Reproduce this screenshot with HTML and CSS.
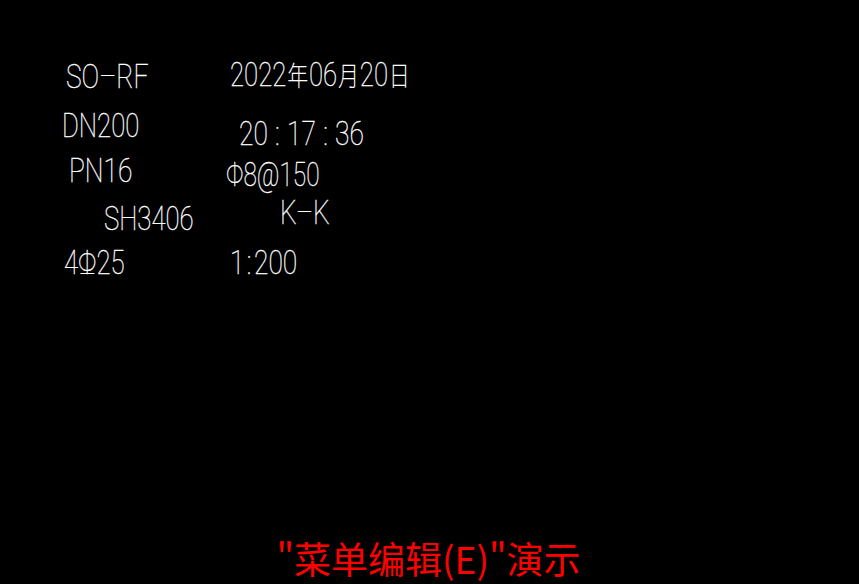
FILE: index.html
```html
<!DOCTYPE html>
<html lang="zh">
<head>
<meta charset="utf-8">
<title>CAD</title>
<link rel="stylesheet" href="styles.css">
</head>
<body>
<div class="screen">
  <div class="canvas">
    <div class="txt t-sorf">SO–RF</div>
    <div class="txt t-date">2022<span class="cjk">年</span>06<span class="cjk">月</span>20<span class="cjk">日</span></div>
    <div class="txt t-dn">DN200</div>
    <div class="txt t-time">20<span class="colon">:</span>17<span class="colon">:</span>36</div>
    <div class="txt t-pn">PN16</div>
    <div class="txt t-phi">Φ8@150</div>
    <div class="txt t-sh">SH3406</div>
    <div class="txt t-kk">K–K</div>
    <div class="txt t-rebar">4<span class="rebar">Φ</span>25</div>
    <div class="txt t-scale">1<span class="colon-s">:</span>200</div>
  </div>
  <div class="caption">"菜单编辑(E)"演示</div>
</div>
</body>
</html>
```
FILE: styles.css
```css
html, body {
  margin: 0;
  padding: 0;
  background: #000;
}
.screen {
  width: 859px;
  height: 584px;
  display: flex;
  flex-direction: column;
  background: #000;
  overflow: hidden;
}
.canvas {
  position: relative;
  flex: 1;
}
.txt {
  position: absolute;
  color: #fff;
  font-family: Roboto, "DejaVu Sans", sans-serif;
  font-weight: 100;
  -webkit-text-stroke: 0.35px #fff;
  font-size: 33px;
  line-height: 33px;
  white-space: nowrap;
  transform: scaleX(0.8);
  transform-origin: 0 0;
}
.cjk {
  font-family: "Noto Sans CJK SC", sans-serif;
  font-weight: 300;
  -webkit-text-stroke: 0;
  font-size: 27px;
  margin: 0 1px;
}
.colon { margin: 0 9px; }
.colon-s { margin: 0 3px; }
.rebar {
  position: relative;
  display: inline-block;
}
.rebar::after {
  content: "";
  position: absolute;
  left: 12%;
  right: 12%;
  bottom: 5px;
  height: 1px;
  background: #fff;
}
.t-sorf { left: 66px; top: 60px; }
.t-date { left: 230px; top: 58px; transform: scaleX(0.78); }
.t-dn { left: 62px; top: 109px; transform: scaleX(0.78); }
.t-time { left: 239px; top: 117px; }
.t-pn { left: 69px; top: 154px; }
.t-phi { left: 226px; top: 158px; transform: scaleX(0.74); }
.t-sh { left: 104px; top: 202px; transform: scaleX(0.78); }
.t-kk { left: 280px; top: 196px; }
.t-rebar { left: 64px; top: 246px; transform: scaleX(0.78); }
.t-scale { left: 230px; top: 246px; }
.caption {
  color: #ff0000;
  font-family: "Noto Sans CJK SC", sans-serif;
  font-size: 37px;
  line-height: 40px;
  text-align: center;
  padding: 0 0 6px 0;
  margin-left: -2px;
}
```
